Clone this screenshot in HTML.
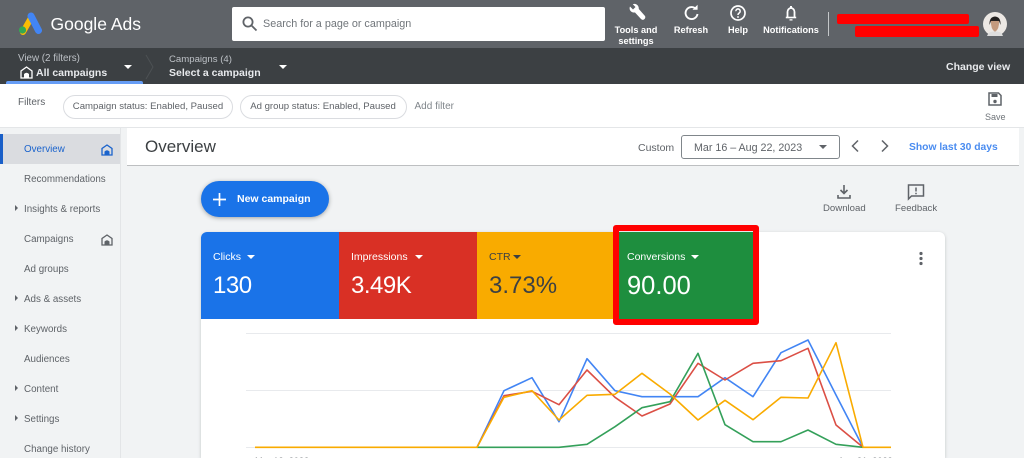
<!DOCTYPE html>
<html><head><meta charset="utf-8"><style>
*{box-sizing:border-box}
html,body{margin:0;padding:0;width:1024px;height:458px;overflow:hidden}
body{background:#f1f3f4;font-family:"Liberation Sans",sans-serif;color:#5f6368}
#w{position:absolute;left:0;top:0;width:1024px;height:458px;overflow:hidden;background:#f1f3f4;filter:blur(.3px)}
.a{position:absolute;white-space:nowrap}
.tb{color:#fff;font-size:9.200px;font-weight:bold;text-align:center;line-height:11px}
.nav{left:24px;font-size:9.800px;color:#5f6368;line-height:14px;margin-top:1px}
.ar{position:absolute;left:15px;width:0;height:0;border-left:3.500px solid #5f6368;border-top:3.500px solid transparent;border-bottom:3.500px solid transparent}
.tri{position:absolute;width:0;height:0;border-left:4.500px solid transparent;border-right:4.500px solid transparent;border-top:4.500px solid #fff}
.chip{position:absolute;top:95px;height:24px;border:1px solid #dadce0;border-radius:12px;background:#fff;font-size:9.600px;line-height:22px;text-align:center;color:#5f6368;white-space:nowrap}
.tile{position:absolute;top:232px;height:87px;color:#fff}
.tile .l{position:absolute;left:12px;top:18px;font-size:10.500px;line-height:14px;white-space:nowrap}
.tile .v{position:absolute;left:12px;top:39px;font-size:24px;line-height:30px;white-space:nowrap;letter-spacing:-.5px}
</style></head><body><div id="w">
<div class="a" style="left:0;top:0;width:1024px;height:48px;background:#5f6368"></div>
<div class="a" style="left:0;top:48px;width:1024px;height:36px;background:#3c4043"></div>
<div class="a" style="left:0;top:84px;width:1024px;height:44px;background:#fff;border-bottom:1px solid #e4e6e8"></div>

<svg class="a" style="left:18px;top:12px" width="24" height="24" viewBox="0 0 24 24"><path d="M5 20 L13 6" stroke="#fbbc04" stroke-width="6" stroke-linecap="round"/><path d="M13 4 L20.500 18.500" stroke="#4285f4" stroke-width="7" stroke-linecap="round"/><circle cx="4.500" cy="18" r="3.600" fill="#34a853"/></svg>
<div class="a" style="left:50.500px;top:12px;font-size:17.500px;line-height:24px;color:#fff">Google Ads</div>

<div class="a" style="left:232px;top:7px;width:373px;height:34px;background:#fff;border-radius:2px"></div>
<svg class="a" style="left:241px;top:15px" width="18" height="18" viewBox="0 0 18 18" fill="none" stroke="#5f6368" stroke-width="1.800"><circle cx="7" cy="7" r="4.600"/><path d="M10.500 10.500 L15.500 15.500"/></svg>
<div class="a" style="left:263px;top:17px;font-size:10.800px;line-height:14px;color:#70757a">Search for a page or campaign</div>

<svg class="a" style="left:626px;top:3px" width="22" height="20" viewBox="0 0 22 20"><path d="M4 3.500 L7 6.500 L9.500 4 L6.800 1.200 C9.500 .2 13 2 12.800 6 L19 13 Q20 15 18 16.500 Q16.500 17.500 15 16 L9 9.500 C5.500 10 2.500 7 4 3.500Z" fill="#fff"/></svg>
<div class="a tb" style="left:610px;top:25px;width:52px">Tools and<br>settings</div>
<svg class="a" style="left:682px;top:4px" width="20" height="18" viewBox="0 0 20 18" fill="none"><path d="M14 5 A6 6 0 1 0 15.500 10" stroke="#fff" stroke-width="1.900"/><path d="M10.500 5.800 H15.600 V.8Z" fill="#fff"/></svg>
<div class="a tb" style="left:670px;top:25px;width:42px">Refresh</div>
<svg class="a" style="left:729px;top:4px" width="18" height="18" viewBox="0 0 18 18" fill="none" stroke="#fff"><circle cx="9" cy="9" r="7" stroke-width="1.700"/><path d="M6.800 7.200 A2.200 2.200 0 1 1 10.200 9 Q9 9.700 9 11" stroke-width="1.500"/><path d="M9 12.200 V13.800" stroke-width="1.600"/></svg>
<div class="a tb" style="left:723px;top:25px;width:30px">Help</div>
<svg class="a" style="left:782px;top:4px" width="18" height="18" viewBox="0 0 18 18" fill="none"><path d="M5.500 13 V8 A3.500 4 0 0 1 12.500 8 V13" stroke="#fff" stroke-width="1.800"/><path d="M3.800 13.500 H14.200" stroke="#fff" stroke-width="1.600"/><path d="M7.500 15.200 H10.500 V16.500 H7.500Z M8 2 H10 V4 H8Z" fill="#fff"/></svg>
<div class="a tb" style="left:761px;top:25px;width:60px">Notifications</div>
<div class="a" style="left:828px;top:12px;width:1px;height:24px;background:#c4c7c9"></div>
<div class="a" style="left:837px;top:14px;width:132px;height:10px;background:#f00;border-radius:2px"></div>
<div class="a" style="left:855px;top:26px;width:124px;height:11px;background:#f00;border-radius:2px"></div>
<svg class="a" style="left:983px;top:12px" width="24" height="24" viewBox="0 0 24 24"><circle cx="12" cy="12" r="12" fill="#ece8e4"/><path d="M6.500 13 Q6 5 12 4.500 Q18 5 17.500 13 L16 9 H8Z" fill="#23201f"/><path d="M8 9 H16 Q16.500 17 12 20 Q7.500 17 8 9Z" fill="#c39a7e"/><path d="M4 24 Q5 20 10 19.500 H14 Q19 20 20 24Z" fill="#ddd"/></svg>

<div class="a" style="left:18px;top:52px;font-size:9.800px;line-height:14px;color:#bdc1c6">View (2 filters)</div>
<svg class="a" style="left:19.500px;top:66px" width="13" height="13" viewBox="0 0 13 13"><path d="M6.500 1 L12 5 V12 H1 V5Z" fill="none" stroke="#fff" stroke-width="1.300"/><path d="M4 12 V8 Q6.500 5.500 9 8 V12Z" fill="#fff"/></svg>
<div class="a" style="left:36px;top:65.500px;font-size:10.500px;line-height:14px;font-weight:bold;color:#e8eaed">All campaigns</div>
<div class="tri" style="left:123.500px;top:64.500px"></div>
<svg class="a" style="left:144px;top:54px" width="12" height="26" viewBox="0 0 12 26" fill="none" stroke="#4d5154" stroke-width="1"><path d="M2 1 L9 13 L2 25"/></svg>
<div class="a" style="left:6px;top:81px;width:137px;height:3px;background:#669df6;border-radius:2px 2px 0 0"></div>
<div class="a" style="left:169px;top:53px;font-size:9.600px;line-height:14px;color:#bdc1c6">Campaigns (4)</div>
<div class="a" style="left:169px;top:65.500px;font-size:10.500px;line-height:14px;font-weight:bold;color:#e8eaed">Select a campaign</div>
<div class="tri" style="left:278.500px;top:64.500px"></div>
<div class="a" style="left:946px;top:60px;font-size:10.500px;line-height:14px;font-weight:bold;color:#e8eaed">Change view</div>

<div class="a" style="left:18px;top:96px;font-size:10px;line-height:14px;color:#5f6368">Filters</div>
<div class="chip" style="left:63px;width:170px">Campaign status: Enabled, Paused</div>
<div class="chip" style="left:239.500px;width:167px">Ad group status: Enabled, Paused</div>
<div class="a" style="left:414.500px;top:100px;font-size:10px;line-height:14px;color:#80868b">Add filter</div>
<svg class="a" style="left:987px;top:91px" width="16" height="16" viewBox="0 0 16 16" fill="none"><path d="M2 2 H11.500 L14 4.500 V14 H2Z" stroke="#5f6368" stroke-width="1.500"/><path d="M4.500 3 H10.500 V6 H4.500Z" fill="#5f6368"/><circle cx="8" cy="10.500" r="1.700" fill="#5f6368"/></svg>
<div class="a" style="left:985px;top:111px;font-size:9px;line-height:13px;color:#70757a">Save</div>

<div class="a" style="left:0;top:128px;width:121px;height:330px;background:#f1f3f4;border-right:1px solid #e3e5e7"></div>
<div class="a" style="left:0;top:134px;width:120px;height:30px;background:#dadce0"></div>
<div class="a" style="left:0;top:134px;width:3px;height:30px;background:#1a5fc8"></div>
<div class="a nav" style="top:142px;color:#1a63cc">Overview</div>
<svg class="a" style="left:101px;top:144px" width="12" height="12" viewBox="0 0 12 12"><path d="M6 1 L11 4.500 V11 H1 V4.500Z" fill="none" stroke="#1a63cc" stroke-width="1.300"/><path d="M3.500 11 V7.500 Q6 5 8.500 7.500 V11Z" fill="#1a63cc"/></svg>
<div class="a nav" style="top:172px">Recommendations</div>
<div class="ar" style="top:205px"></div><div class="a nav" style="top:202px">Insights &amp; reports</div>
<div class="a nav" style="top:232px">Campaigns</div>
<svg class="a" style="left:101px;top:234px" width="12" height="12" viewBox="0 0 12 12"><path d="M6 1 L11 4.500 V11 H1 V4.500Z" fill="none" stroke="#5f6368" stroke-width="1.300"/><path d="M3.500 11 V7.500 Q6 5 8.500 7.500 V11Z" fill="#5f6368"/></svg>
<div class="a nav" style="top:262px">Ad groups</div>
<div class="ar" style="top:295px"></div><div class="a nav" style="top:292px">Ads &amp; assets</div>
<div class="ar" style="top:325px"></div><div class="a nav" style="top:322px">Keywords</div>
<div class="a nav" style="top:352px">Audiences</div>
<div class="ar" style="top:385px"></div><div class="a nav" style="top:382px">Content</div>
<div class="ar" style="top:415px"></div><div class="a nav" style="top:412px">Settings</div>
<div class="a nav" style="top:442px">Change history</div>

<div class="a" style="left:127px;top:128px;width:892px;height:38px;background:#fff;border-bottom:1px solid #bdbfc1"></div>
<div class="a" style="left:145px;top:137px;font-size:17px;line-height:20px;color:#3c4043">Overview</div>
<div class="a" style="left:638px;top:141px;font-size:10.500px;line-height:14px;color:#5f6368">Custom</div>
<div class="a" style="left:681px;top:135px;width:159px;height:24px;border:1px solid #80868b;border-radius:3px;background:#fff"></div>
<div class="a" style="left:694px;top:141px;font-size:10.700px;line-height:14px;color:#5f6368">Mar 16 – Aug 22, 2023</div>
<div class="tri" style="left:819px;top:145px;border-top-color:#5f6368"></div>
<svg class="a" style="left:849px;top:139px" width="44" height="14" viewBox="0 0 44 14" fill="none" stroke="#5f6368" stroke-width="1.500"><path d="M9 1.500 L3.500 7 L9 12.500"/><path d="M33 1.500 L38.500 7 L33 12.500"/></svg>
<div class="a" style="left:909px;top:141px;font-size:10.300px;line-height:14px;font-weight:bold;color:#4a8cf0">Show last 30 days</div>

<div class="a" style="left:201px;top:181px;width:128px;height:36px;background:#1a73e8;border-radius:18px;box-shadow:0 1px 4px rgba(60,64,67,.45)"></div>
<svg class="a" style="left:212px;top:192px" width="15" height="15" viewBox="0 0 15 15"><path d="M7.500 1 V14 M1 7.500 H14" stroke="#fff" stroke-width="1.700"/></svg>
<div class="a" style="left:237px;top:192px;font-size:10.500px;line-height:14px;font-weight:bold;color:#fff">New campaign</div>

<svg class="a" style="left:836px;top:184px" width="16" height="16" viewBox="0 0 16 16"><path d="M8 1 V9 M4.500 6 L8 9.500 L11.500 6" fill="none" stroke="#5f6368" stroke-width="1.600"/><path d="M2 11 V14 H14 V11" fill="none" stroke="#5f6368" stroke-width="1.600"/></svg>
<div class="a" style="left:823px;top:202px;font-size:9.600px;line-height:14px;color:#5f6368">Download</div>
<svg class="a" style="left:907px;top:183px" width="18" height="18" viewBox="0 0 18 18" fill="none"><path d="M1.500 2 H16.500 V13 H4.500 L1.500 16Z" stroke="#5f6368" stroke-width="1.500"/><path d="M9 4.500 V8.500 M9 9.800 V11.300" stroke="#5f6368" stroke-width="1.500"/></svg>
<div class="a" style="left:895px;top:202px;font-size:9.600px;line-height:14px;color:#5f6368">Feedback</div>

<div class="a" style="left:201px;top:232px;width:744px;height:226px;background:#fff;border-radius:6px 6px 0 0;box-shadow:0 1px 3px rgba(60,64,67,.25)"></div>
<div class="tile" style="left:201px;width:138px;background:#1a73e8;border-radius:6px 0 0 0"><div class="l">Clicks</div><div class="tri" style="left:46px;top:23px"></div><div class="v">130</div></div>
<div class="tile" style="left:339px;width:138px;background:#d93025"><div class="l">Impressions</div><div class="tri" style="left:76px;top:23px"></div><div class="v">3.49K</div></div>
<div class="tile" style="left:477px;width:138px;background:#f9ab00;color:#3c4043"><div class="l">CTR</div><div class="tri" style="left:36px;top:23px;border-top-color:#3c4043"></div><div class="v" style="letter-spacing:0">3.73%</div></div>
<div class="tile" style="left:615px;width:140px;background:#1e8e3e"><div class="l">Conversions</div><div class="tri" style="left:76px;top:23px"></div><div class="v" style="font-size:25.500px;letter-spacing:0">90.00</div></div>
<div class="a" style="left:613px;top:225px;width:146px;height:100px;border:6px solid #f00;border-radius:3px"></div>
<svg class="a" style="left:917px;top:251px" width="8" height="15" viewBox="0 0 8 15" fill="#5f6368"><circle cx="4" cy="2.500" r="1.600"/><circle cx="4" cy="7.500" r="1.600"/><circle cx="4" cy="12.500" r="1.600"/></svg>

<svg class="a" style="left:0;top:0" width="1024" height="458" viewBox="0 0 1024 458" fill="none" stroke-linejoin="round">
<path d="M246 333.500 H891 M246 390.500 H891 M246 447.500 H891" stroke="#e8eaed" stroke-width="1"/>
<path d="M477 447.300 L504 390.700 532 377.700 559 421.700 587 358.700 615 390.700 642 396.700 670 396.700 698 396.700 725 377.700 753 396.700 781 352.700 808 340 836 395 863 447.300" stroke="#4285f4" stroke-width="1.600"/>
<path d="M477 447.300 L504 395.700 532 391.300 559 404.700 587 370 615 397.300 642 416 670 404 698 363.300 725 380 753 363.300 781 360.700 808 348.300 836 425 863 447.300" stroke="#db4f45" stroke-width="1.600"/>
<path d="M477 447.300 H559 L587 444.300 615 426.700 642 407.700 670 401.700 698 353.300 725 424.700 753 441.700 781 441.700 808 430 836 444.300 863 447.300" stroke="#34a05a" stroke-width="1.600"/>
<path d="M255 447.300 H477 L504 397.300 532 390.700 559 420 587 395.300 615 394.300 642 373.300 670 394 698 420 725 400.300 753 419.700 781 397.300 808 398 836 342.700 863 447.300 H891" stroke="#f9ab00" stroke-width="1.600"/>
</svg>
<div class="a" style="left:255px;top:453.500px;font-size:9.200px;line-height:14px;color:#70757a">Mar 13, 2023</div>
<div class="a" style="left:838px;top:453.500px;font-size:9.200px;line-height:14px;color:#70757a">Aug 21, 2023</div>
</div></body></html>
